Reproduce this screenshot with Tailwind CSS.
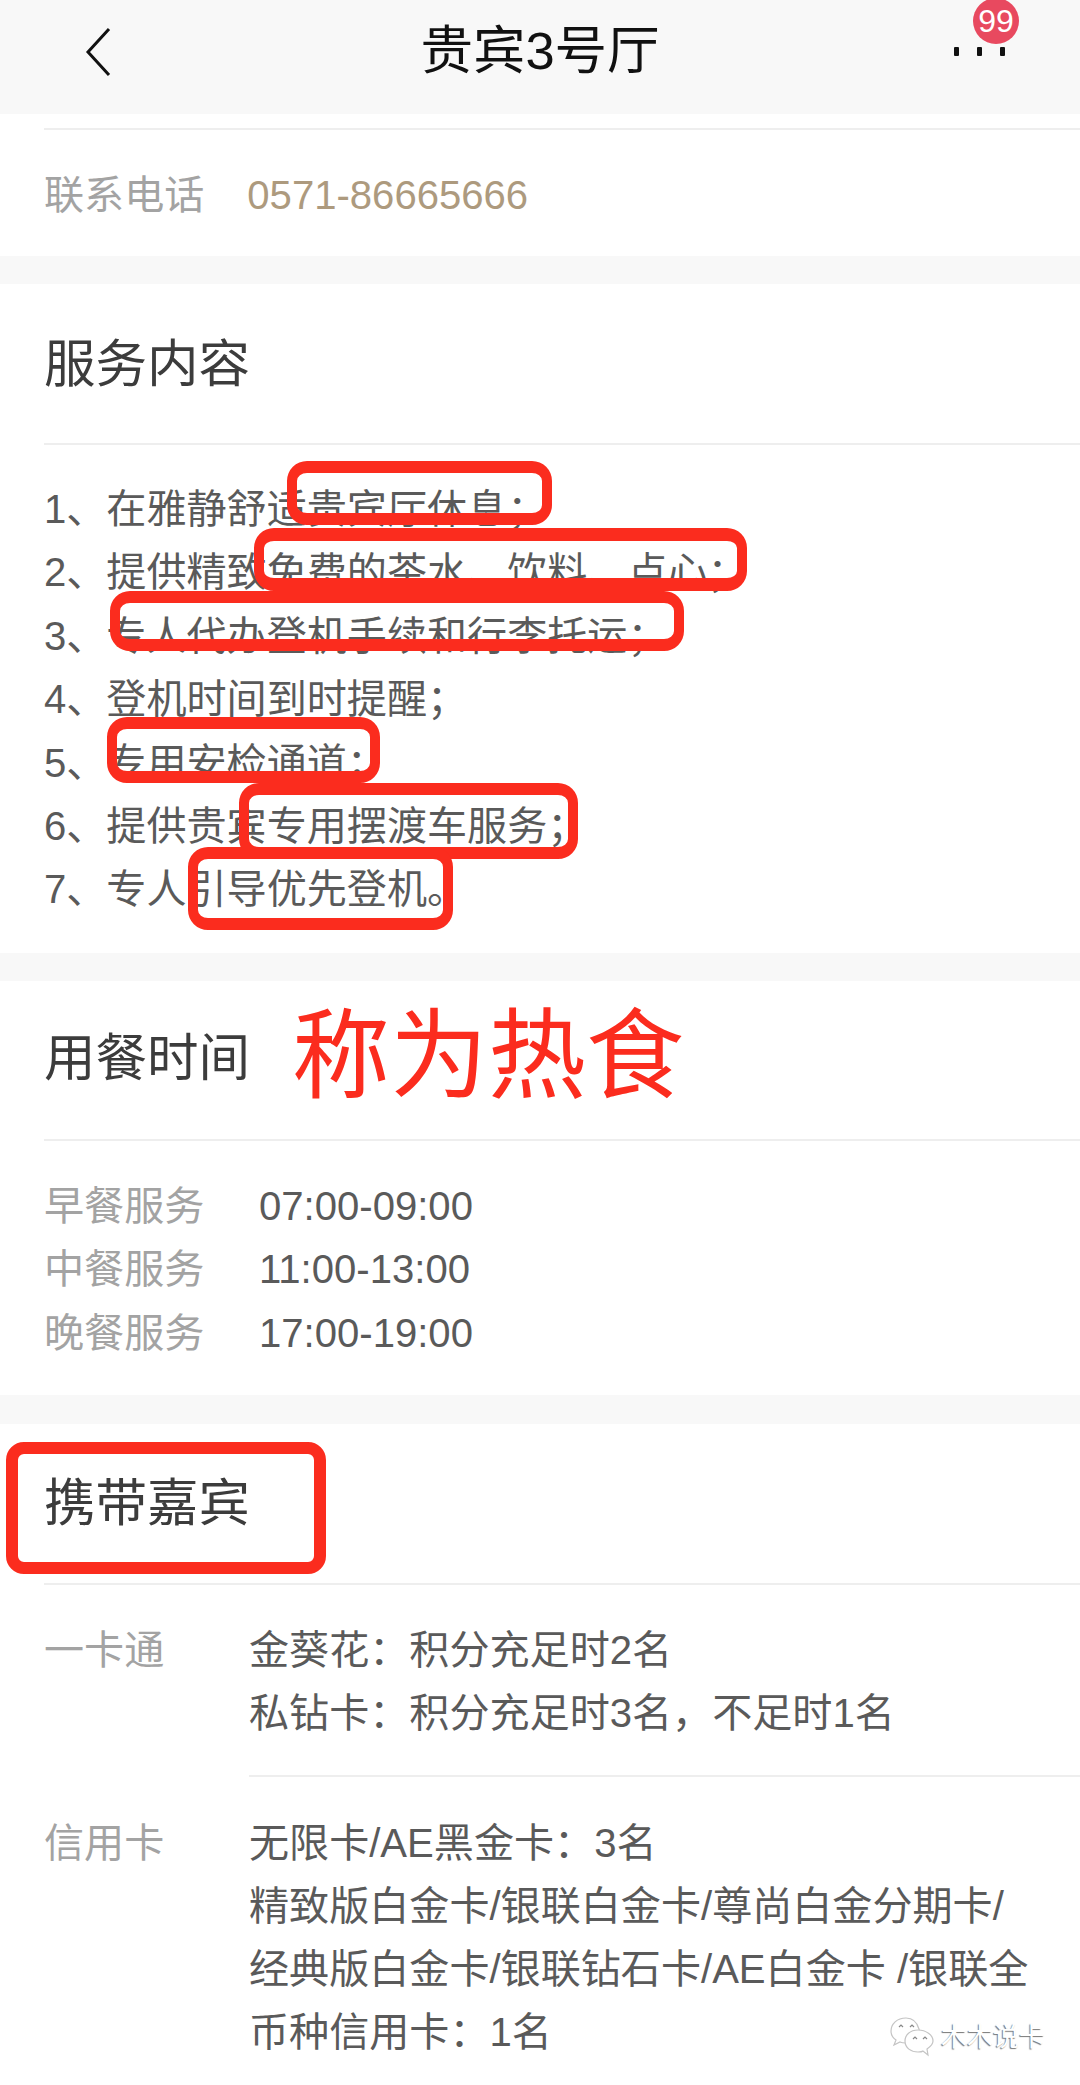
<!DOCTYPE html>
<html lang="zh">
<head>
  <meta charset="UTF-8" />
  <meta name="viewport" content="width=device-width, initial-scale=1.0" />
  <title>贵宾3号厅</title>
  <script src="https://cdn.jsdelivr.net/npm/@tailwindcss/browser@4"></script>
</head>
<body class="bg-[#f8f8f8] font-['Liberation_Sans','Noto_Sans_CJK_SC',sans-serif]">
  <div class="relative w-[1080px] h-[2085px] overflow-hidden">

    <!-- 顶栏 -->
    <header class="relative h-[114px] bg-[#f8f8f8] flex justify-center pt-[21px]">
      <svg class="absolute left-[84px] top-[27px]" width="28" height="50" viewBox="0 0 28 50" fill="none" stroke="#111" stroke-width="3"><path d="M25 2 L4 25 L25 48" /></svg>
      <h1 class="text-[52.5px] leading-[60px] text-[#111]">贵宾3号厅</h1>
      <div class="absolute left-[954px] top-[47px] flex gap-[18px]">
        <span class="w-[5px] h-[9px] rounded-[1px] bg-[#111]"></span>
        <span class="w-[5px] h-[9px] rounded-[1px] bg-[#111]"></span>
        <span class="w-[5px] h-[9px] rounded-[1px] bg-[#111]"></span>
      </div>
      <span class="absolute left-[973px] top-[-2px] w-[46px] h-[46px] rounded-full bg-[#e8495f] text-white text-[32px] leading-[46px] text-center">99</span>
    </header>

    <!-- 联系电话 -->
    <section class="bg-white h-[142px] pl-11">
      <div class="h-[14px]"></div>
      <div class="h-[2px] bg-[#eeeeee]"></div>
      <div class="flex gap-[43px] text-[40.1px] leading-[48px] mt-[41px]">
        <span class="text-[#a3a3a3]">联系电话</span>
        <span class="text-[#ad9a7e]">0571-86665666</span>
      </div>
    </section>

    <!-- 服务内容 -->
    <section class="bg-white mt-[28px] h-[669px] pl-11">
      <h2 class="h-[159px] pt-[50px] text-[51.5px] leading-[60px] text-[#3c3c3c]">服务内容</h2>
      <div class="h-[2px] bg-[#eeeeee]"></div>
      <ol class="mt-[33px] text-[40.1px] leading-[63.4px] text-[#5a5a5a]">
        <li>1、在雅静舒适贵宾厅休息；</li>
        <li>2、提供精致免费的茶水、饮料、点心；</li>
        <li>3、专人代办登机手续和行李托运；</li>
        <li>4、登机时间到时提醒；</li>
        <li>5、专用安检通道；</li>
        <li>6、提供贵宾专用摆渡车服务；</li>
        <li>7、专人引导优先登机。</li>
      </ol>
    </section>

    <!-- 用餐时间 -->
    <section class="bg-white mt-[28px] h-[414px] pl-11">
      <h2 class="h-[158px] pt-[47px] text-[51.5px] leading-[60px] text-[#3c3c3c]">用餐时间</h2>
      <div class="h-[2px] bg-[#eeeeee]"></div>
      <div class="mt-[34px] grid grid-cols-[215px_1fr] text-[40.1px] leading-[63.4px]">
        <span class="text-[#a3a3a3]">早餐服务</span><span class="text-[#5a5a5a]">07:00-09:00</span>
        <span class="text-[#a3a3a3]">中餐服务</span><span class="text-[#5a5a5a]">11:00-13:00</span>
        <span class="text-[#a3a3a3]">晚餐服务</span><span class="text-[#5a5a5a]">17:00-19:00</span>
      </div>
    </section>

    <!-- 携带嘉宾 -->
    <section class="bg-white mt-[29px] h-[661px] pl-11">
      <h2 class="h-[159px] pt-[49px] text-[51.5px] leading-[60px] text-[#3c3c3c]">携带嘉宾</h2>
      <div class="h-[2px] bg-[#eeeeee]"></div>
      <div class="flex mt-[34px]">
        <span class="w-[205px] text-[40.1px] leading-[63.4px] text-[#a3a3a3]">一卡通</span>
        <div class="text-[40.1px] leading-[63.4px] text-[#5a5a5a]">
          <p>金葵花：积分充足时2名</p>
          <p>私钻卡：积分充足时3名，不足时1名</p>
        </div>
      </div>
      <div class="ml-[205px] h-[2px] bg-[#eeeeee] mt-[29px]"></div>
      <div class="flex mt-[35px]">
        <span class="w-[205px] text-[40.1px] leading-[63px] text-[#a3a3a3]">信用卡</span>
        <div class="text-[40.1px] leading-[63px] text-[#5a5a5a] whitespace-nowrap">
          <p>无限卡/AE黑金卡：3名</p>
          <p>精致版白金卡/银联白金卡/尊尚白金分期卡/</p>
          <p>经典版白金卡/银联钻石卡/AE白金卡 /银联全</p>
          <p>币种信用卡：1名</p>
        </div>
      </div>
    </section>

    <!-- 手写标注 -->
    <div class="absolute left-[287px] top-[461px] w-[265px] h-[64px] border-x-[10px] border-y-[12px] border-[#fb2c1e] rounded-[20px]"></div>
    <div class="absolute left-[254px] top-[528px] w-[493px] h-[63px] border-x-[10px] border-y-[13px] border-[#fb2c1e] rounded-[20px]"></div>
    <div class="absolute left-[110px] top-[591px] w-[574px] h-[60px] border-x-[10px] border-y-[12px] border-[#fb2c1e] rounded-[20px]"></div>
    <div class="absolute left-[107px] top-[717px] w-[273px] h-[66px] border-x-[10px] border-y-[12px] border-[#fb2c1e] rounded-[20px]"></div>
    <div class="absolute left-[239px] top-[783px] w-[339px] h-[76px] border-x-[10px] border-y-[12px] border-[#fb2c1e] rounded-[20px]"></div>
    <div class="absolute left-[188px] top-[847px] w-[265px] h-[83px] border-x-[10px] border-y-[12px] border-[#fb2c1e] rounded-[20px]"></div>
    <div class="absolute left-[6px] top-[1442px] w-[320px] h-[132px] border-[12px] border-[#fb2c1e] rounded-[18px]"></div>
    <div class="absolute left-[292px] top-[1000px] text-[98px] leading-[112px] text-[#fb2c1e] whitespace-nowrap">称为热食</div>

    <!-- 水印 -->
    <div class="absolute left-[890px] top-[2017px] flex items-center gap-[7px]">
      <svg width="44" height="40" viewBox="0 0 44 40" fill="#fff" stroke="#c4c4c4" stroke-width="1.2">
        <path d="M16 1 C7 1 1 7 1 14 C1 18 3 21 6 23 L4 28 L10 25 C12 26 14 26 16 26 C27 26 31 19 29 12 C27 5 22 1 16 1 Z" />
        <path d="M28 13 C20 13 15 18 15 24 C15 31 21 35 28 35 C30 35 32 35 33 34 L38 38 L37 32 C40 30 43 27 43 24 C43 18 36 13 28 13 Z" />
        <path d="M9 10 l2 -2 l2 2 M20 10 l2 -2 l2 2 M23 22 l2 -2 l2 2 M33 22 l2 -2 l2 2" fill="none" stroke="#888" />
      </svg>
      <span class="text-[26px] leading-[32px] text-white [text-shadow:-1px_1px_1px_#777]">木木说卡</span>
    </div>
  </div>
</body>
</html>
